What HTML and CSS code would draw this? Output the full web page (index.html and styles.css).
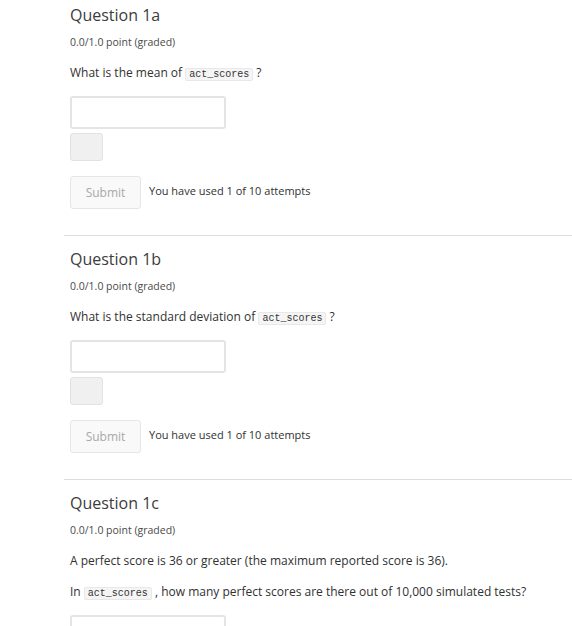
FILE: index.html
```html
<!DOCTYPE html>
<html>
<head>
<meta charset="utf-8">
<link rel="stylesheet" href="styles.css">
</head>
<body>
<div class="page">
  <div class="problem">
    <h3 class="title">Question 1a</h3>
    <div class="points">0.0/1.0 point (graded)</div>
    <p class="text">What is the mean of <code class="code">act_scores</code> ?</p>
    <div class="input"></div>
    <div class="status"></div>
    <div class="actions">
      <button class="submit">Submit</button>
      <span class="attempts">You have used 1 of 10 attempts</span>
    </div>
  </div>
  <div class="problem">
    <h3 class="title">Question 1b</h3>
    <div class="points">0.0/1.0 point (graded)</div>
    <p class="text">What is the standard deviation of <code class="code">act_scores</code> ?</p>
    <div class="input"></div>
    <div class="status"></div>
    <div class="actions">
      <button class="submit">Submit</button>
      <span class="attempts">You have used 1 of 10 attempts</span>
    </div>
  </div>
  <div class="problem">
    <h3 class="title">Question 1c</h3>
    <div class="points">0.0/1.0 point (graded)</div>
    <p class="text">A perfect score is 36 or greater (the maximum reported score is 36).</p>
    <p class="text">In <code class="code">act_scores</code> , how many perfect scores are there out of 10,000 simulated tests?</p>
    <div class="input"></div>
  </div>
</div>
</body>
</html>
```
FILE: styles.css
```css
html, body {
  margin: 0;
  padding: 0;
  background: #fff;
}
body {
  font-family: "Open Sans", "Liberation Sans", sans-serif;
  color: #313131;
  overflow: hidden;
  height: 626px;
}
.page {
  margin-left: 64px;
}
.problem {
  padding: 13px 0 26px 6px;
  border-top: 1px solid #dddddd;
}
.problem:first-child {
  padding-top: 5px;
  border-top: none;
}
.title {
  margin: 0;
  font-size: 16px;
  line-height: 20px;
  font-weight: 400;
  color: #3c3c3c;
}
.points {
  margin-top: 10px;
  font-size: 10.5px;
  line-height: 14px;
  color: #4a4a4a;
}
.text {
  margin: 16px 0 0;
  font-size: 12px;
  line-height: 16px;
  color: #313131;
}
.text + .text {
  margin-top: 15px;
}
.code {
  font-family: "Liberation Mono", "DejaVu Sans Mono", monospace;
  font-size: 10px;
  line-height: 12px;
  background: #f5f5f5;
  border: 1px solid #e8e8e8;
  border-radius: 2px;
  padding: 0 3px;
  color: #333;
}
.input {
  margin-top: 15px;
  width: 152px;
  height: 29px;
  border: 2px solid #e4e4e4;
  border-radius: 3px;
  background: #fff;
}
.status {
  margin-top: 4px;
  width: 31px;
  height: 26px;
  border: 1px solid #e2e2e2;
  border-radius: 3px;
  background: #f0f0f0;
}
.actions {
  margin-top: 15px;
  display: flex;
  align-items: center;
  gap: 8px;
}
.submit {
  width: 71px;
  height: 33px;
  border: 1px solid #e6e6e6;
  border-radius: 3px;
  background: #f9f9f9;
  color: #a8a8a8;
  font-family: "Open Sans", "Liberation Sans", sans-serif;
  font-size: 12px;
  padding: 0;
}
.attempts {
  font-size: 11px;
  line-height: 14px;
  color: #313131;
  margin-top: -3px;
}
```
